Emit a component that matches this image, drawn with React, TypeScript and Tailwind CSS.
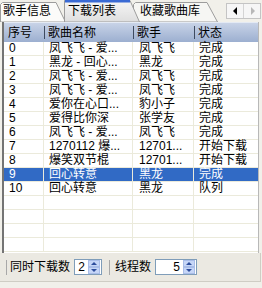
import React from "react";

const rows = [
  { no: "0", song: "凤飞飞 - 爱...", singer: "凤飞飞", status: "完成" },
  { no: "1", song: "黑龙 - 回心...", singer: "黑龙", status: "完成" },
  { no: "2", song: "凤飞飞 - 爱...", singer: "凤飞飞", status: "完成" },
  { no: "3", song: "凤飞飞 - 爱...", singer: "凤飞飞", status: "完成" },
  { no: "4", song: "爱你在心口...", singer: "豹小子", status: "完成" },
  { no: "5", song: "爱得比你深", singer: "张学友", status: "完成" },
  { no: "6", song: "凤飞飞 - 爱...", singer: "凤飞飞", status: "完成" },
  { no: "7", song: "1270112 爆...", singer: "12701...", status: "开始下载" },
  { no: "8", song: "爆笑双节棍", singer: "12701...", status: "开始下载" },
  { no: "9", song: "回心转意", singer: "黑龙", status: "完成", selected: true },
  { no: "10", song: "回心转意", singer: "黑龙", status: "队列" },
];

function Spin({ value, width }: { value: string; width: string }) {
  return (
    <div className={`flex h-[16px] items-center border border-[#7f9db9] bg-white ${width}`}>
      <span className="flex-1 pr-[3px] text-right leading-none">{value}</span>
      <svg width="12" height="14" viewBox="0 0 12 14" className="mr-[1px]">
        <rect x="0.5" y="0.5" width="11" height="6" fill="#c6d6f7" stroke="#a9bde8" />
        <rect x="0.5" y="7.5" width="11" height="6" fill="#c6d6f7" stroke="#a9bde8" />
        <polygon points="3,5 6,2 9,5" fill="#2d4d9c" />
        <polygon points="3,9 6,12 9,9" fill="#2d4d9c" />
      </svg>
    </div>
  );
}

export default function App() {
  return (
    <div className="flex h-[288px] w-[262px] flex-col overflow-hidden bg-[#f1f0ea] font-['Liberation_Sans','Noto_Sans_CJK_SC',sans-serif] text-[12px] text-black">
      {/* tab strip */}
      <div className="flex h-[22px] shrink-0 items-end">
        <div className="relative h-[22px] w-[66px]">
          <svg className="absolute inset-0" width="66" height="22" viewBox="0 0 66 22">
            <polygon points="0.5,22 0.5,4.5 2.5,2.5 56,2.5 65.5,22" fill="#fbfbf9" stroke="#9c9c9c" />
          </svg>
          <span className="relative block pl-[3px] pt-[4px] leading-[14px]">歌手信息</span>
        </div>
        <div className="relative z-10 ml-[-2px] h-[22px] w-[76px]">
          <svg className="absolute inset-0" width="76" height="22" viewBox="0 0 76 22">
            <defs>
              <linearGradient id="t2" x1="0" y1="0" x2="0" y2="1">
                <stop offset="0" stopColor="#f6f6f6" />
                <stop offset="1" stopColor="#dedede" />
              </linearGradient>
            </defs>
            <polygon points="0.5,22 0.5,0.5 66,0.5 75.5,22" fill="url(#t2)" stroke="#9c9c9c" />
            <rect x="1" y="0" width="65" height="2.5" fill="#3a6ad4" />
          </svg>
          <span className="relative block pl-[4px] pt-[4px] leading-[14px]">下载列表</span>
        </div>
        <div className="relative ml-[-7px] h-[22px] w-[85px]">
          <svg className="absolute inset-0" width="85" height="22" viewBox="0 0 85 22">
            <polygon points="0.5,22 0.5,4.5 2.5,2.5 74,2.5 84.5,22" fill="#f6f6f3" stroke="#9c9c9c" />
          </svg>
          <span className="relative block pl-[7px] pt-[4px] leading-[14px]">收藏歌曲库</span>
        </div>
        <div className="mb-[3px] ml-auto mr-[1px] flex h-[16px] w-[35px] border border-[#c4c4c4] bg-[#f6f6f6]">
          <div className="flex flex-1 items-center justify-center border-r border-[#d4d4d4]">
            <svg width="5" height="8" viewBox="0 0 5 8">
              <polygon points="4,0 0,4 4,8" fill="#000" />
            </svg>
          </div>
          <div className="flex flex-1 items-center justify-center">
            <svg width="5" height="8" viewBox="0 0 5 8">
              <polygon points="1,0 5,4 1,8" fill="#b8b8b8" />
            </svg>
          </div>
        </div>
      </div>

      {/* list */}
      <div className="ml-[2px] mr-[3px] flex h-[231px] shrink-0 flex-col border-l-2 border-r border-l-[#747474] border-r-[#b8b8b8] bg-white">
        <div className="grid h-[20px] grid-cols-[40px_89px_61px_1fr] border-t border-t-[#e4eaf4] bg-gradient-to-b from-[#c8d3e7] to-[#9cafd0]">
          {["序号", "歌曲名称", "歌手", "状态"].map((h, i) => (
            <div key={h} className="flex items-center">
              {i > 0 && <span className="mr-[2px] h-[13px] w-[1px] bg-[#3e4a60]" />}
              <span className={i === 0 ? "pl-[4px]" : "pl-[1px]"}>{h}</span>
            </div>
          ))}
        </div>
        {rows.map((r) => (
          <div
            key={r.no}
            className={`grid h-[14px] grid-cols-[40px_89px_61px_1fr] leading-[13px] ${
              r.selected ? "bg-[#316ac5] text-white" : ""
            }`}
          >
            <div className="border-b border-r border-[#ebeadb] pl-[5px]">{r.no}</div>
            <div className="border-b border-r border-[#ebeadb] pl-[5px]">{r.song}</div>
            <div className="border-b border-r border-[#ebeadb] pl-[6px]">{r.singer}</div>
            <div className="border-b border-[#ebeadb] pl-[5px]">{r.status}</div>
          </div>
        ))}
        {[0, 1, 2, 3].map((k) => (
          <div key={k} className="grid h-[14px] grid-cols-[40px_89px_61px_1fr]">
            <div className="border-b border-r border-[#ebeadb]" />
            <div className="border-b border-r border-[#ebeadb]" />
            <div className="border-b border-r border-[#ebeadb]" />
            <div className="border-b border-[#ebeadb]" />
          </div>
        ))}
      </div>

      {/* bottom bar */}
      <div className="mr-[1px] flex h-[29px] shrink-0 items-center border-b border-r border-[#cfcdc4] bg-[#ebe9e2] pl-[6px]">
        <span className="h-[15px] w-[1px] bg-[#a8a8a8]" />
        <span className="ml-[3px]">同时下载数</span>
        <div className="ml-[4px]">
          <Spin value="2" width="w-[28px]" />
        </div>
        <span className="ml-[7px] h-[15px] w-[1px] bg-[#a8a8a8]" />
        <span className="ml-[5px]">线程数</span>
        <div className="ml-[4px]">
          <Spin value="5" width="w-[42px]" />
        </div>
      </div>
    </div>
  );
}
